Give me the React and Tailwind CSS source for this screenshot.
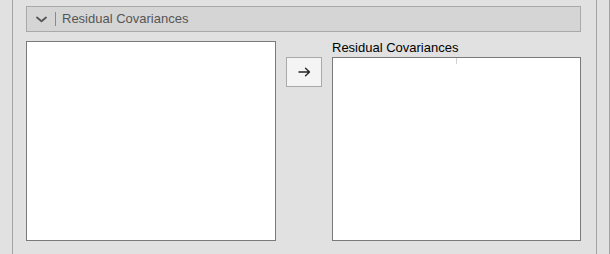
import React from "react";

function Chevron() {
  return (
    <svg width="11" height="7" viewBox="0 0 11 7" className="text-[#555]">
      <path d="M1 1.5 L5.5 5.3 L10 1.5" fill="none" stroke="currentColor" strokeWidth="1.8" strokeLinecap="round" strokeLinejoin="round" />
    </svg>
  );
}

function Arrow() {
  return (
    <svg width="13" height="10" viewBox="0 0 13 10" className="text-[#222]">
      <path d="M1 5 H11.5 M7.5 1.2 L11.5 5 L7.5 8.8" fill="none" stroke="currentColor" strokeWidth="1.3" strokeLinecap="round" strokeLinejoin="round" />
    </svg>
  );
}

export default function App() {
  return (
    <div
      className="flex h-[254px] w-[610px] overflow-hidden bg-[#e1e1e1] pl-[12px]"
      style={{ fontFamily: '"Liberation Sans", Arial, sans-serif' }}
    >
      <div className="h-full w-[585px] shrink-0 border-x border-[#a3a3a3] pl-[13px] pr-[15px] pt-[6px]">
        {/* section header */}
        <div className="flex h-[26px] items-center border border-[#a9a9a9] bg-[#d5d5d5]">
          <div className="ml-[8px] flex w-[12px] justify-center pt-[1px]">
            <Chevron />
          </div>
          <div className="ml-[8px] h-[14px] w-px bg-[#8a8a8a]" />
          <span className="ml-[6px] text-[13px] text-[#555]">Residual Covariances</span>
        </div>

        <div className="mt-[9px] flex">
          <div className="h-[200px] w-[250px] border border-[#7a7a7a] bg-white" />
          <div className="ml-[10px] mt-[16px]">
            <button className="flex h-[30px] w-[36px] items-center justify-center border border-[#a9a9a9] bg-[#f4f4f4]">
              <Arrow />
            </button>
          </div>
          <div className="ml-[10px] flex flex-col">
            <div className="h-[16px] text-[13px] leading-[14px] text-black">Residual Covariances</div>
            <div className="relative h-[184px] w-[249px] border border-[#7a7a7a] bg-white">
              <div className="absolute left-[123px] top-0 h-[6px] w-px bg-[#d0d0d0]" />
            </div>
          </div>
        </div>
      </div>
      <div className="ml-[12px] h-full border-l border-[#a3a3a3]" />
    </div>
  );
}
